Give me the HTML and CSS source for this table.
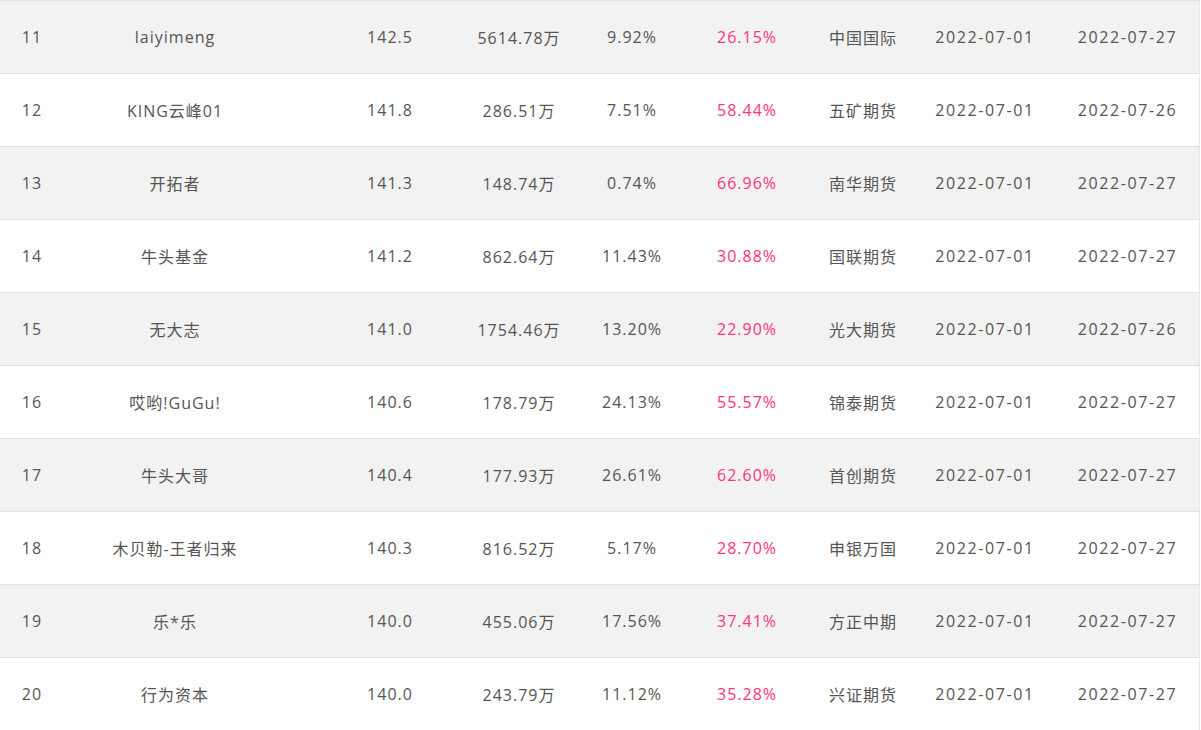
FILE: index.html
```html
<!DOCTYPE html>
<html lang="zh-CN">
<head>
<meta charset="utf-8">
<title>排行榜</title>
<link rel="stylesheet" href="styles.css">
</head>
<body>
<div class="table">
  <div class="row alt"><div class="c c1">11</div><div class="c c2">laiyimeng</div><div class="c c3">142.5</div><div class="c c4">5614.78万</div><div class="c c5">9.92%</div><div class="c c6 red">26.15%</div><div class="c c7">中国国际</div><div class="c c8">2022-07-01</div><div class="c c9">2022-07-27</div></div>
  <div class="row"><div class="c c1">12</div><div class="c c2">KING云峰01</div><div class="c c3">141.8</div><div class="c c4">286.51万</div><div class="c c5">7.51%</div><div class="c c6 red">58.44%</div><div class="c c7">五矿期货</div><div class="c c8">2022-07-01</div><div class="c c9">2022-07-26</div></div>
  <div class="row alt"><div class="c c1">13</div><div class="c c2">开拓者</div><div class="c c3">141.3</div><div class="c c4">148.74万</div><div class="c c5">0.74%</div><div class="c c6 red">66.96%</div><div class="c c7">南华期货</div><div class="c c8">2022-07-01</div><div class="c c9">2022-07-27</div></div>
  <div class="row"><div class="c c1">14</div><div class="c c2">牛头基金</div><div class="c c3">141.2</div><div class="c c4">862.64万</div><div class="c c5">11.43%</div><div class="c c6 red">30.88%</div><div class="c c7">国联期货</div><div class="c c8">2022-07-01</div><div class="c c9">2022-07-27</div></div>
  <div class="row alt"><div class="c c1">15</div><div class="c c2">无大志</div><div class="c c3">141.0</div><div class="c c4">1754.46万</div><div class="c c5">13.20%</div><div class="c c6 red">22.90%</div><div class="c c7">光大期货</div><div class="c c8">2022-07-01</div><div class="c c9">2022-07-26</div></div>
  <div class="row"><div class="c c1">16</div><div class="c c2">哎哟!GuGu!</div><div class="c c3">140.6</div><div class="c c4">178.79万</div><div class="c c5">24.13%</div><div class="c c6 red">55.57%</div><div class="c c7">锦泰期货</div><div class="c c8">2022-07-01</div><div class="c c9">2022-07-27</div></div>
  <div class="row alt"><div class="c c1">17</div><div class="c c2">牛头大哥</div><div class="c c3">140.4</div><div class="c c4">177.93万</div><div class="c c5">26.61%</div><div class="c c6 red">62.60%</div><div class="c c7">首创期货</div><div class="c c8">2022-07-01</div><div class="c c9">2022-07-27</div></div>
  <div class="row"><div class="c c1">18</div><div class="c c2">木贝勒-王者归来</div><div class="c c3">140.3</div><div class="c c4">816.52万</div><div class="c c5">5.17%</div><div class="c c6 red">28.70%</div><div class="c c7">申银万国</div><div class="c c8">2022-07-01</div><div class="c c9">2022-07-27</div></div>
  <div class="row alt"><div class="c c1">19</div><div class="c c2">乐*乐</div><div class="c c3">140.0</div><div class="c c4">455.06万</div><div class="c c5">17.56%</div><div class="c c6 red">37.41%</div><div class="c c7">方正中期</div><div class="c c8">2022-07-01</div><div class="c c9">2022-07-27</div></div>
  <div class="row"><div class="c c1">20</div><div class="c c2">行为资本</div><div class="c c3">140.0</div><div class="c c4">243.79万</div><div class="c c5">11.12%</div><div class="c c6 red">35.28%</div><div class="c c7">兴证期货</div><div class="c c8">2022-07-01</div><div class="c c9">2022-07-27</div></div>
</div>
</body>
</html>
```
FILE: styles.css
```css
html, body {
  margin: 0;
  padding: 0;
  background: #ffffff;
}
body {
  font-family: "Open Sans", "Noto Sans CJK SC", sans-serif;
  font-size: 16px;
  color: #555555;
  letter-spacing: 1px;
}
.table {
  width: 1200px;
  box-sizing: border-box;
  border-top: 1px solid #e1e1e6;
  border-right: 1px solid #e6e6ea;
}
.row {
  display: grid;
  grid-template-columns: 64px 181px 205px 124px 108px 120px 116px 127px 154px;
  height: 72px;
  border-bottom: 1px solid #e1e1e6;
  align-items: center;
  background: #ffffff;
}
.row.alt {
  background: #f2f2f2;
}
.c {
  text-align: center;
  white-space: nowrap;
}
.c2 { padding-left: 41px; }
.c3 { padding-left: 85px; }
.c4 { padding-left: 14px; }
.c5 { padding-left: 8px; }
.c6 { padding-left: 10px; }
.c7 { padding-left: 6px; }
.c8 { padding-left: 7px; letter-spacing: 1.6px; }
.c9 { padding-left: 11px; letter-spacing: 1.6px; }
.red {
  color: #ff3377;
}
```
